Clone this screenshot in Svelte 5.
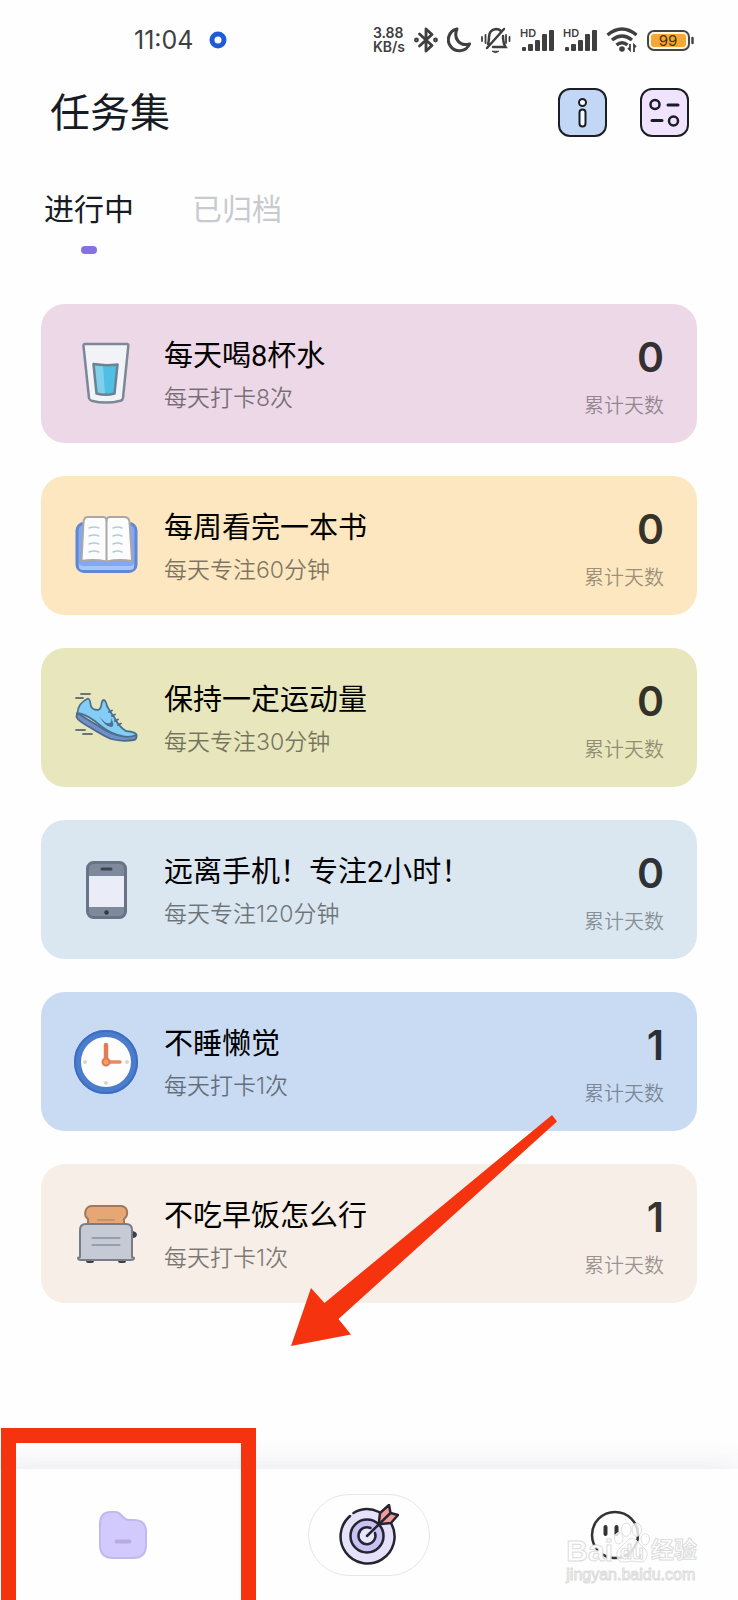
<script lang="ts">
	type Task = {
		icon: string;
		title: string;
		detail: string;
		days: number;
		tone: string;
	};

	const tasks: Task[] = [
		{ icon: 'glass', title: '每天喝8杯水', detail: '每天打卡8次', days: 0, tone: 'pink' },
		{ icon: 'book', title: '每周看完一本书', detail: '每天专注60分钟', days: 0, tone: 'orange' },
		{ icon: 'shoe', title: '保持一定运动量', detail: '每天专注30分钟', days: 0, tone: 'olive' },
		{ icon: 'phone', title: '远离手机！专注2小时！', detail: '每天专注120分钟', days: 0, tone: 'ice' },
		{ icon: 'clock', title: '不睡懒觉', detail: '每天打卡1次', days: 1, tone: 'blue' },
		{ icon: 'toaster', title: '不吃早饭怎么行', detail: '每天打卡1次', days: 1, tone: 'cream' }
	];
</script>

{#snippet signal()}
	<svg class="status__icon" width="34" height="28" viewBox="0 0 34 28" fill="#3f3f3f">
		<text x="0" y="11" font-size="11" font-weight="600">HD</text>
		<rect x="2" y="21" width="4" height="4" rx="1" />
		<rect x="8" y="18" width="5" height="7" rx="1" />
		<rect x="15" y="14" width="5" height="11" rx="1" />
		<rect x="22" y="8" width="5" height="17" rx="1" />
		<rect x="29" y="4" width="5" height="21" rx="1" />
	</svg>
{/snippet}

{#snippet taskIcon(icon: string)}
	<svg class="card__icon" width="66" height="66" viewBox="0 0 66 66" fill="none" stroke-linejoin="round" stroke-linecap="round">
		{#if icon === 'glass'}
			<path d="M12 3H54Q55.500 3 55.300 5L50 57Q49.700 59 47.500 59.700Q33 63.500 18.500 59.700Q16.500 59 16 57L10.500 5Q10.300 3 12 3Z" fill="#f1f3f6" stroke="#7c8897" stroke-width="2.500" />
			<path d="M20.500 23Q32 25 44.500 23.500L41.500 52.500Q33 55 23.500 52.500Z" fill="#4fbfe4" />
			<path d="M21 23.500Q26 24 30 24.500L32 53.500Q27 53.500 24 52.500Z" fill="#80cfeb" />
			<path d="M20.500 23Q32 25 44.500 23.500L41.500 52.500Q33 55 23.500 52.500Z" stroke="#6c8294" stroke-width="2.500" />
		{:else if icon === 'book'}
			<rect x="4" y="10.500" width="59" height="48" rx="7" fill="#81a8f1" stroke="#6186d4" stroke-width="3" />
			<path d="M6 50Q6 53 10 53H57Q61 53 61 50V54Q61 57 57 57H10Q6 57 6 54Z" fill="#a9c4fa" />
			<path d="M15 4H30Q33.500 4 33.500 8Q33.500 4 37 4H51Q56 4 56.500 9L59 48Q46 46 33.500 48.500Q21 46 8.500 48L10.500 9Q11 4 15 4Z" fill="#fcfcfc" stroke="#aaa7a8" stroke-width="2" />
			<path d="M33.500 8V48" stroke="#aaa7a8" stroke-width="2" />
			<path d="M16 15Q21 13 26 15M16 23Q21 21 26 23M16 31Q21 29 26 31M16 39Q21 37 26 39M40 15Q45 13 49 15M40 23Q45 21 49 23M40 31Q45 29 49 31M40 39Q45 37 49 39" stroke="#afcce2" stroke-width="1.500" />
		{:else if icon === 'shoe'}
			<path d="M8 9H17M3 13H10M3 45H12M10 49H19" stroke="#6b7574" stroke-width="1.800" />
			<path d="M4 28L3.500 32Q5 36 18 43Q31 51 38 54Q49 57 61 55Q64 54 63.500 50Q56 52 49 51Q37 49 27 42Z" fill="#6f91c9" stroke="#4c6a8a" stroke-width="1.800" />
			<path d="M4.500 28Q5 18 15 13.500Q17 14 17.500 19Q18 25 25 25Q28 24 28.500 19Q29 15 31 15Q33 16 34 21Q37 27 41 32Q46 42 53 46Q63 47 63.500 50Q56 53 49 51Q38 49 28 41Q14 29 4.500 28Z" fill="#83cdf7" stroke="#4c718f" stroke-width="1.800" />
			<path d="M36 27L39 25.500M39 31L42 29.500M42 36L45 34.500M45 40L48 38.500" stroke="#4c6a8a" stroke-width="1.800" />
			<path d="M26 31Q33 40 37 38Q39 36 38 33Q42 40 39 42Q33 43 26 31Z" fill="#4c718f" />
		{:else if icon === 'phone'}
			<rect x="14.500" y="5.500" width="38" height="55" rx="6" fill="#7f899c" stroke="#687385" stroke-width="3" />
			<rect x="16" y="19" width="35" height="31" fill="#eaedf8" />
			<path d="M29 12H38" stroke="#3e434d" stroke-width="3" />
			<circle cx="33.500" cy="55.500" r="2.200" fill="#333943" />
		{:else if icon === 'clock'}
			<circle cx="33" cy="33" r="28.500" fill="#fdfdfd" stroke="#4c7dcc" stroke-width="7" />
			<circle cx="33" cy="33" r="31" stroke="#3d6ec3" stroke-width="2" />
			<circle cx="12" cy="33" r="2" fill="#d5d5d4" />
			<circle cx="54" cy="33" r="2" fill="#d5d5d4" />
			<circle cx="33" cy="54" r="2" fill="#d5d5d4" />
			<path d="M33 16V33" stroke="#e27b56" stroke-width="4.500" />
			<path d="M33 33H47" stroke="#e88960" stroke-width="3.500" />
			<circle cx="33" cy="33" r="3.500" fill="#f4a15d" stroke="#df7a58" stroke-width="2" />
		{:else}
			<path d="M15 23V18Q11 15 12.500 10Q14 5 19 5H47Q53 5 54 10Q55 15 51 18V23Z" fill="#e7a774" stroke="#a1785c" stroke-width="2" />
			<path d="M25 19H41" stroke="#c79069" stroke-width="2" />
			<path d="M60 30Q64 31 64 34Q63 37 60 37Z" fill="#3d3f46" />
			<path d="M15 60H19M47 60H51" stroke="#3d4047" stroke-width="4" />
			<path d="M13 23H53Q59 23 59 29V56L61 57Q61 59 58 59H8Q5 59 5 57L7 56V29Q7 23 13 23Z" fill="#c5cad4" stroke="#777d86" stroke-width="2" />
			<path d="M19.500 37H46.500M19.500 44H46.500" stroke="#969fae" stroke-width="2" />
		{/if}
	</svg>
{/snippet}

<div class="page">
	<div class="status">
		<span class="status__time">11:04</span>
		<svg class="status__ring" width="18" height="18" viewBox="0 0 18 18">
			<circle cx="9" cy="9" r="6" fill="none" stroke="#1e5bd8" stroke-width="5" />
		</svg>
		<div class="status__right">
			<div class="status__speed">
				<span>3.88</span>
				<span>KB/s</span>
			</div>
			<svg class="status__icon" width="24" height="28" viewBox="0 0 24 28" fill="none" stroke="#3f3f3f" stroke-width="2.800" stroke-linejoin="round" stroke-linecap="round">
				<path d="M5.500 8L18 19.500L12 25V3L18 8.500L5.500 20" />
				<circle cx="2.500" cy="14" r="1" />
				<circle cx="21.500" cy="14" r="1" />
			</svg>
			<svg class="status__icon" width="24" height="28" viewBox="0 0 24 28" fill="none" stroke="#3f3f3f" stroke-width="3" stroke-linejoin="round">
				<path d="M10 3A11 11 0 1 0 22.500 18Q15 20 11 15Q7 10 10 3Z" />
			</svg>
			<svg class="status__icon" width="31" height="28" viewBox="0 0 31 28" fill="none" stroke="#3f3f3f" stroke-width="2.500" stroke-linecap="round">
				<path d="M8 18Q9 15 9 11Q9 4 16 3Q19 3 21 5M23 10Q23 17 25.500 21H13M24 3L7 22" />
				<path d="M12.500 25.500Q15.500 28 18.500 25.500Z" fill="#3f3f3f" stroke-width="1" />
				<path d="M2 11V15M5.500 9V17M26 9V17M29.500 11V15" stroke-width="1.800" />
			</svg>
			{@render signal()}
			{@render signal()}
			<svg class="status__icon" width="32" height="28" viewBox="0 0 32 28" fill="none" stroke="#3f3f3f" stroke-width="3.500">
				<path d="M1.500 9Q16-3 30.500 9M6 14Q16 6 26 14M10.500 19Q16 14.500 21.500 19" />
				<circle cx="16" cy="23" r="2.800" fill="#3f3f3f" stroke="none" />
				<path d="M24 18V24L22 22M28 26V19L30 21" stroke-width="1.800" />
			</svg>
			<svg class="status__icon" width="47" height="28" viewBox="0 0 47 28">
				<rect x="1" y="5" width="41" height="19" rx="6" fill="#fff8df" stroke="#454545" stroke-width="2" />
				<rect x="4" y="8" width="35" height="13" rx="3" fill="#f5a836" />
				<path d="M45.500 12V17" stroke="#454545" stroke-width="2.500" stroke-linecap="round" />
				<text x="21" y="20" font-size="15" text-anchor="middle" fill="#4a3212">99</text>
			</svg>
		</div>
	</div>

	<header class="header">
		<h1 class="header__title">任务集</h1>
		<button class="header__button header__button--info" aria-label="说明">
			<svg width="45" height="45" viewBox="0 0 45 45" fill="#f7f9fc" stroke="#1b1f25" stroke-width="2">
				<circle cx="22.500" cy="12.500" r="3.500" />
				<rect x="19.500" y="19.500" width="6" height="17" rx="3" />
			</svg>
		</button>
		<button class="header__button header__button--filter" aria-label="筛选">
			<svg width="45" height="45" viewBox="0 0 45 45" fill="none" stroke="#191b25" stroke-width="2.500" stroke-linecap="round">
				<circle cx="13" cy="14.500" r="4.500" />
				<path d="M26 15H36M10 30.500H20" stroke-width="3" />
				<circle cx="31.500" cy="31" r="4.500" />
			</svg>
		</button>
	</header>

	<div class="tabs">
		<button class="tabs__item tabs__item--active">进行中</button>
		<button class="tabs__item">已归档</button>
	</div>

	<main class="list">
		{#each tasks as task}
			<article class="card card--{task.tone}">
				{@render taskIcon(task.icon)}
				<div class="card__text">
					<h2 class="card__title">{task.title}</h2>
					<p class="card__detail">{task.detail}</p>
				</div>
				<div class="card__count">
					<strong class="card__days">{task.days}</strong>
					<span class="card__label">累计天数</span>
				</div>
			</article>
		{/each}
		<svg class="arrow" width="268" height="232" viewBox="0 0 268 232">
			<path d="M1 231L21 173L34.500 188L262 0L267 6.500L48.500 204L61 219.500Z" fill="#f5330f" />
		</svg>
	</main>

	<nav class="nav">
		<a class="nav__item nav__item--marked" href="#tasks" aria-label="任务集">
			<svg width="48" height="48" viewBox="0 0 48 48">
				<path d="M12 1H16Q20 1 23 5L25 7Q27 9 30 9H35Q47 9 47 21V34Q47 47 34 47H14Q1 47 1 34V13Q1 1 12 1Z" fill="#d2cafc" stroke="#c2b8ec" stroke-width="2" />
				<path d="M17.500 30.500H30.500" stroke="#b7abe3" stroke-width="4" stroke-linecap="round" />
			</svg>
		</a>
		<a class="nav__item" href="#focus" aria-label="专注">
			<span class="nav__pill">
				<svg width="60" height="62" viewBox="0 0 60 62" fill="none" stroke="#242432" stroke-width="2.500" stroke-linejoin="round" stroke-linecap="round">
					<circle cx="28" cy="32" r="27" fill="#e4e1f9" stroke="none" />
					<path d="M14.500 9A27 27 0 0 1 40 8M52.500 20A27 27 0 1 1 11 12" />
					<circle cx="28" cy="32" r="16.500" fill="#c9c1f2" />
					<circle cx="28" cy="32" r="8.500" fill="#e9e6fb" stroke="none" />
					<path d="M31.500 24A8.500 8.500 0 1 0 36 29" />
					<path d="M40 18L41 9L50 1L51.500 9L59 11L52 19L42 20Z" fill="#f19b9b" />
					<path d="M28 32L51.500 9" />
				</svg>
			</span>
		</a>
		<a class="nav__item" href="#mine" aria-label="我的">
			<svg width="50" height="50" viewBox="0 0 50 50" fill="none" stroke="#333" stroke-linecap="round">
				<circle cx="25" cy="25" r="23" stroke-width="2.500" />
				<path d="M15.500 17V24M26.500 17V24" stroke-width="4" />
			</svg>
		</a>
		<div class="watermark">
			<div class="watermark__logo">
				<span class="watermark__bai">Bai</span>
				<svg class="watermark__paw" width="38" height="44" viewBox="0 0 40 44" fill="#fff" fill-opacity="0.8" stroke="#dcdcdc" stroke-width="1">
					<ellipse cx="6" cy="17" rx="4.500" ry="6" />
					<ellipse cx="14" cy="8" rx="5" ry="7" />
					<ellipse cx="25" cy="8" rx="5" ry="7" />
					<ellipse cx="34" cy="18" rx="4.500" ry="6" />
					<path d="M20 17Q24 17 28 23Q36 29 36 34Q35 43 27 42Q20 40 13 42Q4 43 4 34Q4 29 12 23Q16 17 20 17Z" />
					<text x="20" y="39" font-size="22" font-weight="700" text-anchor="middle">du</text>
				</svg>
				<span class="watermark__word">经验</span>
			</div>
			<span class="watermark__site">jingyan.baidu.com</span>
		</div>
	</nav>
</div>

<style>
	:global(body) {
		margin: 0;
		background: #fefefe;
	}

	.page {
		display: flex;
		flex-direction: column;
		min-height: 100vh;
		font-family: Roboto, 'Noto Sans CJK SC', sans-serif;
		color: #171b24;
	}

	.page * {
		box-sizing: border-box;
	}

	h1,
	h2,
	p {
		margin: 0;
		font-weight: 400;
	}

	button {
		padding: 0;
		border: none;
		background: none;
		font-family: inherit;
		color: inherit;
	}

	svg {
		display: block;
		flex: none;
	}

	.status {
		display: flex;
		align-items: center;
		height: 80px;
		padding: 0 44px 0 134px;
		font-family: Inter, sans-serif;
		color: #3f3f3f;
	}

	.status__time {
		font-size: 25px;
	}

	.status__ring {
		margin-left: 16px;
	}

	.status__right {
		display: flex;
		align-items: center;
		gap: 9px;
		margin-left: auto;
	}

	.status__speed {
		display: flex;
		flex-direction: column;
		font-size: 14px;
		font-weight: 600;
		line-height: 14px;
	}

	.header {
		display: flex;
		align-items: center;
		gap: 33px;
		height: 65px;
		padding: 0 49px 0 50px;
	}

	.header__title {
		margin-right: auto;
		padding-top: 2px;
		font-size: 40px;
		line-height: 60px;
	}

	.header__button {
		width: 49px;
		height: 49px;
		border: 2px solid #1b1f25;
		border-radius: 12px;
	}

	.header__button--info {
		background: #c2d7f5;
	}

	.header__button--filter {
		background: #efe3fd;
	}

	.tabs {
		display: flex;
		gap: 58px;
		padding: 41px 44px 50px;
	}

	.tabs__item {
		display: flex;
		flex-direction: column;
		align-items: center;
		gap: 12px;
		font-size: 30px;
		line-height: 48px;
		color: #c8cacf;
	}

	.tabs__item--active {
		color: #171b24;
	}

	.tabs__item::after {
		content: '';
		width: 16px;
		height: 8px;
		border-radius: 4px;
	}

	.tabs__item--active::after {
		background: #8672dc;
	}

	.list {
		position: relative;
		display: flex;
		flex-direction: column;
		gap: 33px;
		padding: 0 41px 32px;
	}

	.card {
		display: flex;
		align-items: center;
		gap: 25px;
		min-height: 139px;
		padding: 0 33px 0 32px;
		border-radius: 24px;
	}

	.card--pink {
		background: #ecd8e6;
	}

	.card--orange {
		background: #fce7c1;
	}

	.card--olive {
		background: #e7e6bc;
	}

	.card--ice {
		background: #dae7f0;
	}

	.card--blue {
		background: #c9dbf3;
	}

	.card--cream {
		background: #f7eee7;
	}

	.card__text {
		flex: 1;
		padding-top: 7px;
	}

	.card__title {
		font-size: 29px;
		line-height: 42px;
		color: #000;
	}

	.card__detail {
		font-family: Inter, 'Noto Sans CJK SC', sans-serif;
		font-size: 23px;
		font-weight: 350;
		line-height: 42px;
		color: rgba(0, 0, 0, 0.5);
	}

	.card__count {
		display: flex;
		flex-direction: column;
		align-items: flex-end;
		padding-top: 17px;
		line-height: 49px;
	}

	.card__days {
		font-family: Inter, sans-serif;
		font-size: 41px;
		font-weight: 600;
		color: rgba(0, 0, 0, 0.8);
	}

	.card__label {
		font-size: 20px;
		font-weight: 350;
		color: rgba(0, 0, 0, 0.4);
	}

	/* Pointer drawn over the last cards */
	.arrow {
		position: absolute;
		left: 290px;
		bottom: -12px;
	}

	.nav {
		position: relative;
		display: grid;
		grid-template-columns: repeat(3, 1fr);
		height: 131px;
		margin-top: auto;
		background: #fefefe;
		box-shadow: 0 0 30px rgba(80, 70, 130, 0.14);
	}

	.nav__item {
		position: relative;
		display: flex;
		align-items: center;
		justify-content: center;
	}

	.nav__item--marked::after {
		content: '';
		position: absolute;
		inset: -41px -10px 0 1px;
		border: 15px solid #f5330f;
		border-bottom: none;
	}

	.nav__pill {
		display: flex;
		align-items: center;
		justify-content: center;
		width: 122px;
		height: 82px;
		border: 1px solid #e6e6e8;
		border-radius: 41px;
	}

	.watermark {
		position: absolute;
		right: 41px;
		bottom: 15px;
		color: #fff;
		-webkit-text-stroke: 1px #dcdcdc;
	}

	.watermark__logo {
		display: flex;
		align-items: flex-end;
		justify-content: space-between;
		line-height: 28px;
	}

	.watermark__bai {
		font-family: 'Liberation Sans', sans-serif;
		font-size: 30px;
		font-weight: 700;
	}

	.watermark__word {
		font-size: 23px;
		font-weight: 700;
	}

	.watermark__site {
		display: block;
		font-family: 'Liberation Sans', sans-serif;
		font-size: 16px;
		line-height: 20px;
	}
</style>
